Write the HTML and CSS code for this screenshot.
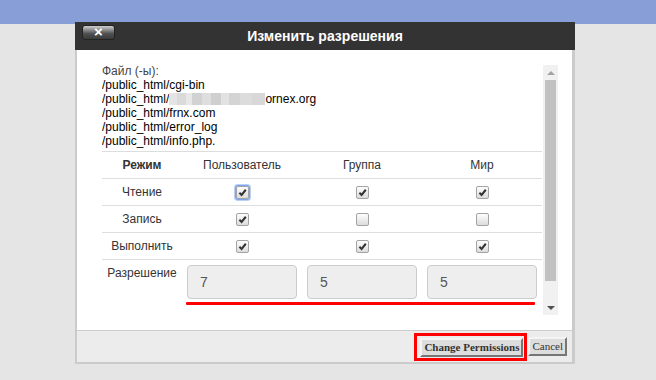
FILE: index.html
```html
<!DOCTYPE html>
<html lang="ru">
<head>
<meta charset="utf-8">
<link rel="stylesheet" href="styles.css">
</head>
<body>
<div class="topbar"></div>
<div class="dialog">
  <div class="dlg-head">
    <span class="close">×</span>
    <div class="title">Изменить разрешения</div>
    <span></span>
  </div>
  <div class="dlg-frame">
    <div class="dlg-body">
      <div class="scroll">
        <div class="content">
          <div class="files">
            <div class="files-label">Файл (-ы):</div>
            <div>/public_html/cgi-bin</div>
            <div>/public_html/<span class="blur"></span>ornex.org</div>
            <div>/public_html/frnx.com</div>
            <div>/public_html/error_log</div>
            <div>/public_html/info.php.</div>
          </div>
          <div class="row head">
            <span class="lbl bold">Режим</span>
            <span>Пользователь</span>
            <span>Группа</span>
            <span>Мир</span>
          </div>
          <div class="row">
            <span class="lbl">Чтение</span>
            <span class="cb on focus"><svg viewBox="0 0 12 12"><path d="M2.6 6.2 L5 8.6 L9.6 3"/></svg></span>
            <span class="cb on"><svg viewBox="0 0 12 12"><path d="M2.6 6.2 L5 8.6 L9.6 3"/></svg></span>
            <span class="cb on"><svg viewBox="0 0 12 12"><path d="M2.6 6.2 L5 8.6 L9.6 3"/></svg></span>
          </div>
          <div class="row">
            <span class="lbl">Запись</span>
            <span class="cb on"><svg viewBox="0 0 12 12"><path d="M2.6 6.2 L5 8.6 L9.6 3"/></svg></span>
            <span class="cb"></span>
            <span class="cb"></span>
          </div>
          <div class="row">
            <span class="lbl">Выполнить</span>
            <span class="cb on"><svg viewBox="0 0 12 12"><path d="M2.6 6.2 L5 8.6 L9.6 3"/></svg></span>
            <span class="cb on"><svg viewBox="0 0 12 12"><path d="M2.6 6.2 L5 8.6 L9.6 3"/></svg></span>
            <span class="cb on"><svg viewBox="0 0 12 12"><path d="M2.6 6.2 L5 8.6 L9.6 3"/></svg></span>
          </div>
          <div class="row perm">
            <span class="lbl">Разрешение</span>
            <span class="inp">7</span>
            <span class="inp">5</span>
            <span class="inp">5</span>
            <span class="redline"></span>
          </div>
        </div>
        <div class="sbar">
          <div class="sb-btn"><span class="arr-up"></span></div>
          <div class="thumb"></div>
          <div class="sb-fill"></div>
          <div class="sb-btn"><span class="arr-down"></span></div>
        </div>
      </div>
    </div>
    <div class="dlg-foot">
      <span class="hl"><span class="btn primary">Change Permissions</span></span>
      <span class="btn">Cancel</span>
    </div>
  </div>
</div>
</body>
</html>
```
FILE: styles.css
```css
html, body {
  margin: 0;
  padding: 0;
}
body {
  background: #e5e5e5;
  font-family: "Liberation Sans", Arial, sans-serif;
  width: 656px;
  height: 380px;
  overflow: hidden;
}
.topbar {
  height: 24px;
  background: #879ed6;
}
.dialog {
  width: 500px;
  margin: -2px 0 0 75px;
}
.dlg-head {
  height: 28px;
  background: #333333;
  display: grid;
  grid-template-columns: 1fr auto 1fr;
  align-items: center;
}
.close {
  align-self: start;
  justify-self: start;
  margin: 3px 0 0 7px;
  width: 31px;
  height: 13px;
  border: 1px solid #222;
  border-radius: 3px;
  background: linear-gradient(#cfcfcf 0%, #8d8d8d 30%, #4e4e4e 60%, #3b3b3b 100%);
  color: #fff;
  font-weight: bold;
  font-size: 15px;
  line-height: 11px;
  text-align: center;
}
.title {
  color: #fff;
  font-weight: bold;
  font-size: 14px;
}
.dlg-frame {
  border-left: 2px solid #cbcbcb;
  border-right: 3px solid #cbcbcb;
  border-bottom: 2px solid #cbcbcb;
  background: #fff;
}
.dlg-body {
  height: 251px;
  padding: 14px 14px 15px 25px;
}
.scroll {
  display: flex;
  gap: 1px;
  height: 251px;
}
.content {
  width: 440px;
  height: 251px;
  overflow: hidden;
}
.files {
  font-size: 12px;
  line-height: 14px;
  color: #000;
  padding-bottom: 3px;
}
.files-label {
  color: #444;
}
.blur {
  display: inline-block;
  width: 96px;
  height: 12px;
  vertical-align: -2px;
  background: linear-gradient(90deg,
    #e4e4e4 0 8%, #dadada 8% 18%, #e8e8e8 18% 24%, #d2d2d2 24% 34%,
    #dedede 34% 44%, #cfcfcf 44% 54%, #e2e2e2 54% 62%, #d4d4d4 62% 74%,
    #dcdcdc 74% 86%, #d8d8d8 86% 100%);
}
.row {
  display: grid;
  grid-template-columns: 80px 120px 120px 120px;
  height: 26px;
  border-top: 1px solid #dddddd;
  align-items: center;
  justify-items: center;
  font-size: 12px;
  color: #333;
}
.bold {
  font-weight: bold;
}
.cb {
  width: 11px;
  height: 11px;
  border: 1px solid #a4a4a4;
  border-radius: 2px;
  background: linear-gradient(#fdfdfd, #dcdcdc);
  display: flex;
  align-items: center;
  justify-content: center;
}
.cb svg {
  width: 11px;
  height: 11px;
}
.cb path {
  fill: none;
  stroke: #333;
  stroke-width: 2.2;
}
.cb.focus {
  box-shadow: 0 0 0 1px #7ea6ee, 0 0 0 2px #b9cff6;
}
.perm {
  height: auto;
  align-items: start;
  padding-top: 5px;
}
.perm .lbl {
  line-height: 16px;
}
.inp {
  box-sizing: border-box;
  width: 110px;
  height: 34px;
  background: #eeeeee;
  border: 1px solid #cccccc;
  border-radius: 4px;
  font-size: 14px;
  color: #555;
  line-height: 32px;
  padding-left: 12px;
  justify-self: center;
}
.redline {
  grid-column: 2 / 5;
  justify-self: stretch;
  height: 3px;
  margin: 3px 7px 0 4px;
  background: #ff0000;
  border-radius: 1px;
}
.sbar {
  width: 15px;
  margin-top: 1px;
  height: 250px;
  background: #f1f1f1;
  display: flex;
  flex-direction: column;
  align-items: center;
}
.sb-btn {
  height: 15px;
  width: 15px;
  display: flex;
  align-items: center;
  justify-content: center;
}
.arr-up {
  width: 0;
  height: 0;
  border-left: 4px solid transparent;
  border-right: 4px solid transparent;
  border-bottom: 4px solid #a3a3a3;
}
.arr-down {
  width: 0;
  height: 0;
  border-left: 4px solid transparent;
  border-right: 4px solid transparent;
  border-top: 4px solid #505050;
}
.thumb {
  width: 11px;
  height: 201px;
  background: #c1c1c1;
}
.sb-fill {
  flex: 1;
}
.dlg-foot {
  height: 31px;
  border-top: 1px solid #cccccc;
  background: #ececec;
  display: flex;
  justify-content: flex-end;
  align-items: center;
  gap: 1px;
  padding-right: 5px;
}
.hl {
  border: 3px solid #ff0000;
  padding: 2px 1px 1px 3px;
  display: flex;
}
.btn {
  display: inline-block;
  font-family: "Liberation Serif", "Times New Roman", serif;
  font-size: 11px;
  line-height: 13px;
  color: #333;
  background: #dddddd;
  padding: 1px 2px;
  border: 2px solid;
  border-color: #f4f4f4 #767676 #767676 #f4f4f4;
}
.btn.primary {
  font-weight: bold;
}
```
